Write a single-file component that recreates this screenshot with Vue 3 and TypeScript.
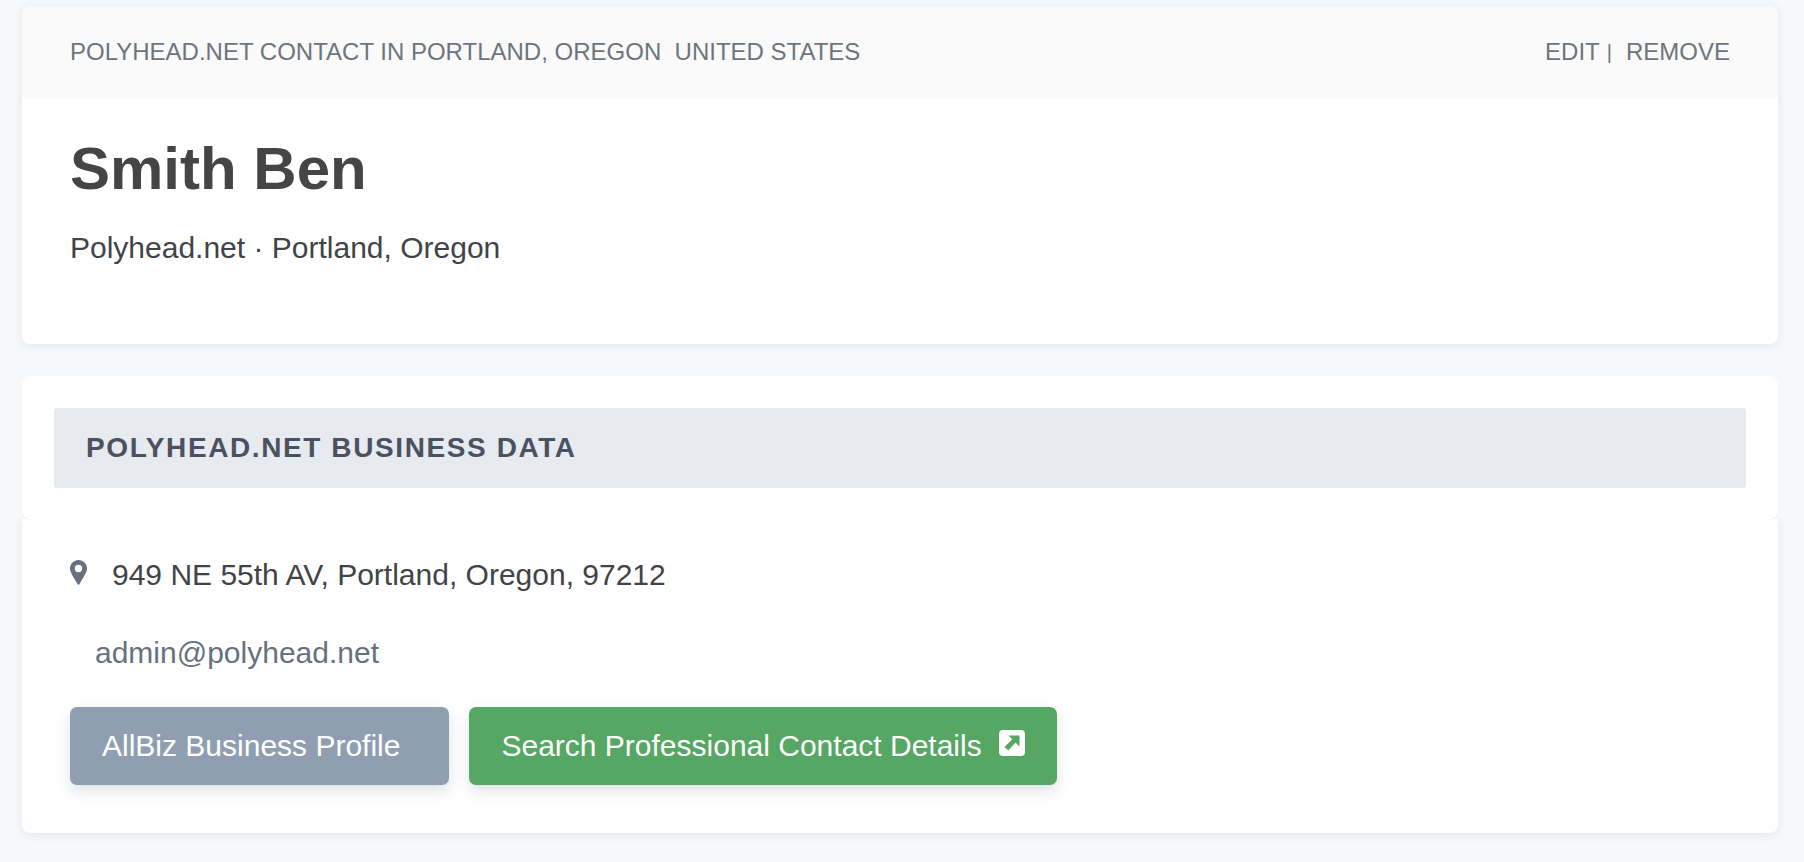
<script setup lang="ts">
const title = 'POLYHEAD.NET CONTACT IN PORTLAND, OREGON\u00a0 UNITED STATES'
</script>

<template>
  <main class="page">
    <section class="card top">
      <header class="head">
        <span>{{ title }}</span>
        <span class="actions"><a>EDIT</a><span class="sep">|</span><a>REMOVE</a></span>
      </header>
      <div class="intro">
        <h1>Smith Ben</h1>
        <p>Polyhead.net · Portland, Oregon</p>
      </div>
    </section>

    <section class="data">
      <div class="card bar-wrap">
        <h2>POLYHEAD.NET BUSINESS DATA</h2>
      </div>
      <div class="card body">
        <div class="address">
          <svg class="pin" viewBox="0 0 17 25" aria-hidden="true">
            <path fill-rule="evenodd" d="M8.500 0C3.800 0 0 3.800 0 8.500c0 3.400 1.200 4.400 7.400 15.600.5.900 1.700.9 2.200 0C15.800 12.900 17 11.900 17 8.500 17 3.800 13.200 0 8.500 0zm0 12.200a3.700 3.700 0 1 1 0-7.400 3.700 3.700 0 0 1 0 7.400z" />
          </svg>
          <span>949 NE 55th AV, Portland, Oregon, 97212</span>
        </div>
        <div class="email">admin@polyhead.net</div>
        <div class="buttons">
          <a class="btn gray">AllBiz Business Profile</a>
          <a class="btn green">
            <span>Search Professional Contact Details</span>
            <svg class="ext" viewBox="0 0 26 26" aria-hidden="true">
              <rect width="26" height="26" rx="4" fill="#fff" />
              <path d="M9.500 5.500H20.500V16.500L16.600 12.600 9.200 20.500 5.500 16.800 13.400 9.400z" fill="#55a763" />
            </svg>
          </a>
        </div>
      </div>
    </section>
  </main>
</template>

<style>
html, body { margin: 0; background: #f6f8fa; }
</style>

<style scoped>
.page {
  display: flex;
  flex-direction: column;
  gap: 32px;
  padding: 6px 26px 28px 22px;
  font-family: "Liberation Sans", Arial, sans-serif;
  color: #404448;
}
.card {
  background: #fff;
  border-radius: 8px;
  box-shadow: 0 2px 8px rgba(60, 80, 110, 0.1);
}
.top { height: 338px; overflow: hidden; }
.head {
  display: flex;
  justify-content: space-between;
  align-items: center;
  height: 92px;
  padding: 0 48px;
  background: #fafafb;
  color: #6c757d;
  font-size: 24px;
}
.actions { display: flex; }
.sep { margin: 0 14px 0 7px; font-size: 20px; line-height: 28px; }
.intro { padding: 37px 48px 0; }
h1 {
  margin: 0;
  font-size: 60px;
  line-height: 68px;
  font-weight: 700;
  color: #454545;
}
.intro p { margin: 27px 0 0; font-size: 30px; line-height: 36px; }
.data { display: flex; flex-direction: column; height: 457px; }
.bar-wrap { height: 143px; box-sizing: border-box; padding: 32px 32px 0; position: relative; z-index: 1; box-shadow: 0 1px 2px rgba(60, 80, 110, 0.03); }
h2 {
  margin: 0;
  height: 80px;
  padding: 0 32px;
  display: flex;
  align-items: center;
  border-radius: 3px;
  background: #e7eaef;
  color: #4a5261;
  font-size: 28px;
  font-weight: 700;
  letter-spacing: 1.6px;
}
.body { flex: 1; padding: 41px 48px 0; border-radius: 0 0 8px 8px; }
.address {
  display: flex;
  align-items: center;
  gap: 25px;
  height: 30px;
  font-size: 30px;
}
.pin { width: 17px; height: 25px; fill: #67727e; margin-top: -6px; }
.email { margin: 46px 0 0 25px; height: 34px; line-height: 34px; font-size: 30px; color: #667180; }
.buttons { display: flex; gap: 20px; margin-top: 37px; }
.btn {
  display: flex;
  align-items: center;
  height: 78px;
  padding: 0 32px;
  border-radius: 7px;
  color: #fff;
  font-size: 30px;
  box-shadow: 0 6px 14px rgba(60, 80, 110, 0.16);
}
.gray { background: #8f9fb1; padding-right: 49px; }
.green { background: #55a763; gap: 17px; }
.ext { width: 26px; height: 26px; margin-top: -6px; }
</style>
